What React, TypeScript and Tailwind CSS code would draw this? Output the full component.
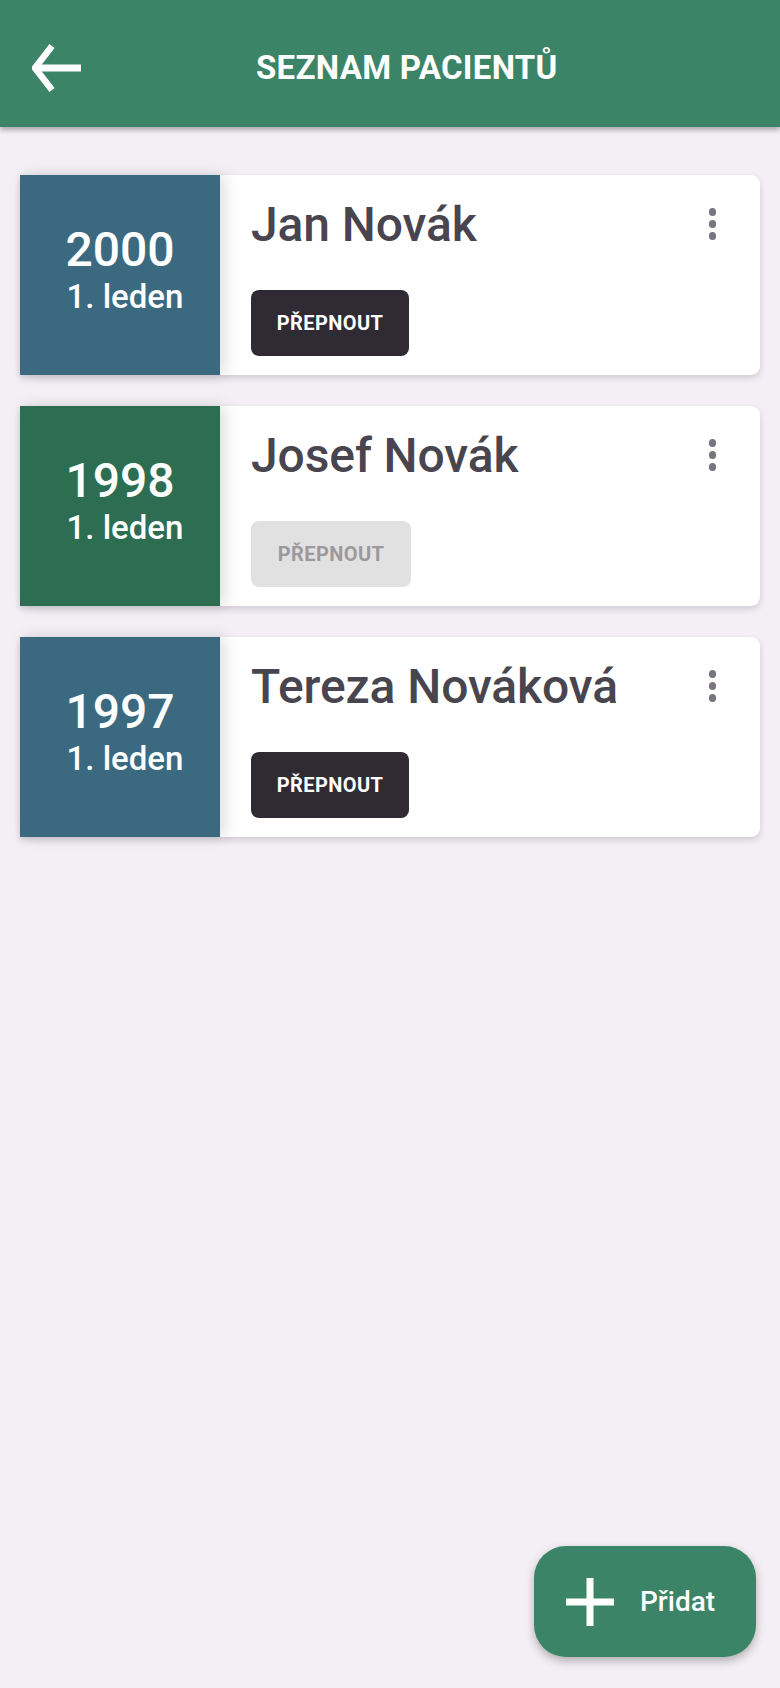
import React from 'react';

type Patient = {
    name: string;
    year: string;
    day: string;
    color: string;
    active: boolean;
};

const patients: Patient[] = [
    { name: 'Jan Novák', year: '2000', day: '1. leden', color: 'bg-[#3b6a80]', active: true },
    { name: 'Josef Novák', year: '1998', day: '1. leden', color: 'bg-[#2d6d52]', active: false },
    { name: 'Tereza Nováková', year: '1997', day: '1. leden', color: 'bg-[#3b6a80]', active: true },
];

function BackArrow() {
    return (
        <svg width="50" height="50" viewBox="0 0 50 50" fill="none" className="shrink-0">
            <path d="M20 3 L3 25 L20 47" stroke="white" strokeWidth="6.5" strokeLinejoin="miter" strokeLinecap="butt" />
            <path d="M3 25 H49" stroke="white" strokeWidth="7" />
        </svg>
    );
}

function Kebab() {
    return (
        <div className="flex flex-col items-center gap-[4.5px] pt-[11px]">
            <span className="w-[7.5px] h-[7.5px] rounded-full bg-[#79747e]" />
            <span className="w-[7.5px] h-[7.5px] rounded-full bg-[#79747e]" />
            <span className="w-[7.5px] h-[7.5px] rounded-full bg-[#79747e]" />
        </div>
    );
}

function PatientCard({ p }: { p: Patient }) {
    return (
        <div className="flex h-[200px] bg-white rounded-r-[9px] shadow-[0_3px_6px_rgba(60,40,70,0.18)]">
            <div className={`${p.color} w-[200px] shrink-0 relative z-10 flex flex-col items-center justify-center pb-[10px] text-white shadow-[5px_0_14px_rgba(0,0,0,0.13)]`}>
                <span className="text-[48px] leading-[54px] font-medium">{p.year}</span>
                <span className="text-[33px] leading-[40px] font-medium ml-[10px]">{p.day}</span>
            </div>
            <div className="flex-1 flex justify-between pl-[31px] pr-[44px] pt-[22px]">
                <div className="flex flex-col items-start">
                    <span className="text-[48px] leading-[56px] text-[#49454f] font-medium tracking-[-0.1px]">{p.name}</span>
                    <button
                        className={
                            p.active
                                ? 'mt-[37px] h-[66px] w-[158px] rounded-[8px] bg-[#2f2a33] text-white text-[20px] font-bold tracking-[0.4px]'
                                : 'mt-[37px] h-[66px] w-[160px] rounded-[8px] bg-[#e1e1e2] text-[#9b999c] text-[20px] font-bold tracking-[0.4px]'
                        }
                    >
                        PŘEPNOUT
                    </button>
                </div>
                <Kebab />
            </div>
        </div>
    );
}

export default function App() {
    return (
        <div className="relative w-[780px] h-[1688px] bg-[#f3eff4] overflow-hidden font-['Roboto','Liberation_Sans',sans-serif]">
            <header className="h-[127px] bg-[#3b8467] flex items-center pl-[32px] pt-[8px] shadow-[0_3px_5px_rgba(0,0,0,0.3)] relative z-20">
                <BackArrow />
                <h1 className="ml-[174px] text-white text-[33px] leading-[40px] font-bold tracking-[0.3px]">SEZNAM PACIENTŮ</h1>
            </header>

            <main className="flex flex-col gap-[31px] pt-[48px] pl-[20px] pr-[20px]">
                {patients.map((p) => (
                    <PatientCard key={p.name} p={p} />
                ))}
            </main>

            {/* FAB */}
            <button className="absolute right-[24px] bottom-[31px] w-[222px] h-[111px] rounded-[32px] bg-[#3b8467] flex items-center pl-[32px] gap-[26px] text-white shadow-[0_4px_10px_rgba(0,0,0,0.28)]">
                <svg width="48" height="48" viewBox="0 0 48 48" className="shrink-0">
                    <path d="M24 0 V48 M0 24 H48" stroke="white" strokeWidth="7" />
                </svg>
                <span className="text-[28px] font-medium">Přidat</span>
            </button>
        </div>
    );
}
